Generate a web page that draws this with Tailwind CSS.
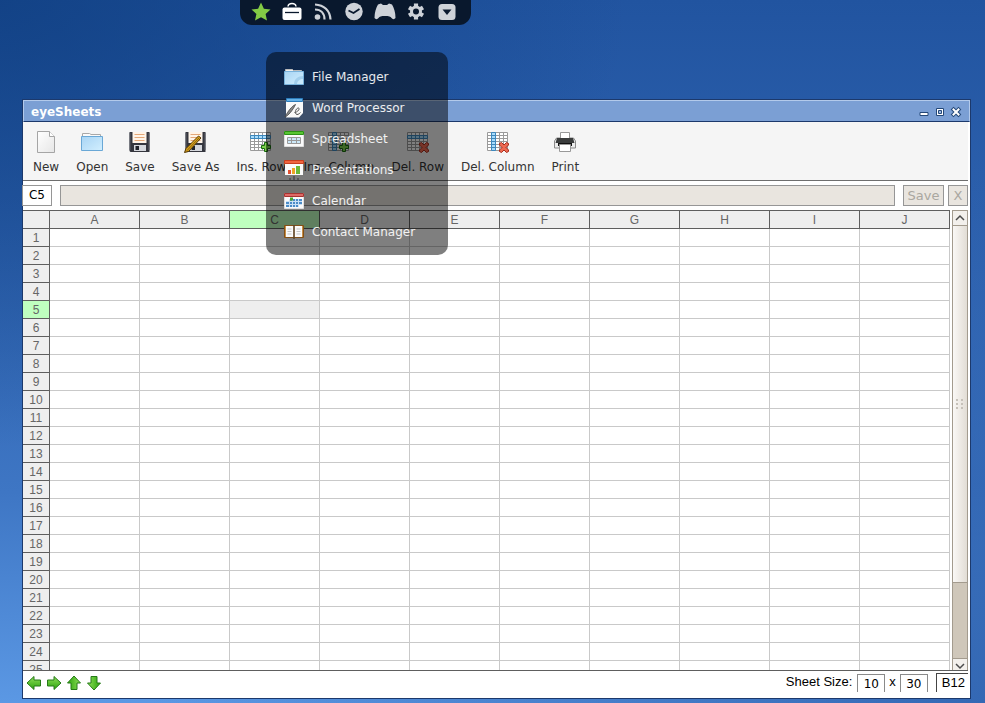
<!DOCTYPE html>
<html lang="en">
<head>
<meta charset="utf-8">
<title>eyeSheets</title>
<script src="https://cdn.jsdelivr.net/npm/@tailwindcss/browser@4"></script>
</head>
<body class="relative flex h-screen flex-col overflow-hidden bg-[radial-gradient(ellipse_at_0%_0%,#0f3e80cc_0%,#0f3e8000_45%),radial-gradient(ellipse_at_100%_100%,#2a5ca8cc_0%,#2a5ca800_60%),linear-gradient(180deg,#2154a0_0%,#2c60ad_30%,#3e76c4_70%,#5b98e4_100%)] pt-[99px] pr-[14px] pb-1 pl-[22px] font-['DejaVu_Sans',sans-serif] text-xs text-[#333]">

<svg class="absolute size-0" aria-hidden="true">
  <defs>
    <linearGradient id="blue" x1="0" y1="0" x2="1" y2="1"><stop offset="0" stop-color="#a8d4f4"/><stop offset="1" stop-color="#d2efff"/></linearGradient>
    <linearGradient id="paper" x1="0" y1="0" x2="1" y2="1"><stop offset="0" stop-color="#fff"/><stop offset="1" stop-color="#e6e6e6"/></linearGradient>
    <linearGradient id="green" x1="0" y1="0" x2="0" y2="1"><stop offset="0" stop-color="#8fe05a"/><stop offset="1" stop-color="#2ba20c"/></linearGradient>
    <g id="grid"><path d="M1.500 2.500h20v18h-20z" fill="#fff"/><path d="M1.500 2.500h20v18h-20zM5.500 2v19M9.500 2v19M13.500 2v19M17.500 2v19M1 5.500h21M1 8.500h21M1 11.500h21M1 14.500h21M1 17.500h21" fill="none" stroke="#9a9a9a"/></g>
    <path id="plus" d="M15.500 12.500h3v3h3v3h-3v3h-3v-3h-3v-3h3z" fill="#7ed04c" stroke="#176c0c"/>
    <path id="cross" d="M13.500 13.500l2-1 2.500 2.500 2.500-2.500 2 1v1.500l-2.500 2.500 2.500 2.500v1.500l-2 1-2.500-2.500-2.500 2.500-2-1v-1.500l2.500-2.500-2.500-2.500z" fill="#ee6a52" stroke="#a92c1c"/>
    <g id="disk"><path d="M1.500 2h20v20h-19l-1-1z" fill="#35363e"/><path d="M4.500 2h14v11h-14z" fill="#fff4e8"/><path d="M6.500 4.500h10M6.500 7.500h10M6.500 10.500h10" stroke="#e5a878"/><path d="M6 15h12v6H6z" fill="#d5d7dc"/><path d="M7.500 16h3.500v4H7.500z" fill="#20222a"/><path d="M2 3v17M21 3v17" stroke="#5c5f69"/></g>
    <path id="arrow" d="M1 8l7-6.500v3.500h6.500v6H8v3.500z" fill="url(#green)" stroke="#257a17" stroke-linejoin="round"/>
  </defs>
</svg>

<nav aria-label="Dock" class="absolute top-0 left-[240px] flex h-[25px] w-[231px] justify-center gap-[11px] rounded-b-xl bg-[#09182d] pt-[2px] pr-[3px] text-[#ced2d8]">
  <button aria-label="Favourites" class="size-5"><svg viewBox="0 0 20 20"><path d="M10 .5l2.900 6.200 6.600.7-4.900 4.500 1.400 6.600L10 15.200l-6 3.300 1.400-6.600L.5 7.400l6.600-.7z" fill="#83cb45"/></svg></button>
  <button aria-label="Office" class="size-5"><svg viewBox="0 0 20 20"><path d="M6 4.500C6.500.5 13.500.5 14 4.500" fill="none" stroke="#fff" stroke-width="1.500"/><rect x=".5" y="5.500" width="19" height="12.500" rx="2" fill="#fff"/><path d="M3 10.500h14" stroke="#09182d" stroke-width="1.300"/></svg></button>
  <button aria-label="Feeds" class="size-5"><svg viewBox="0 0 20 20" fill="none" stroke="currentColor" stroke-width="2.200"><circle cx="4.500" cy="15" r="2.800" fill="currentColor" stroke="none"/><path d="M2 7.500c6 0 9.500 4 9.500 10M2 2.500c9 .5 15 6 15.500 15"/></svg></button>
  <button aria-label="Clock" class="size-5"><svg viewBox="0 0 20 20"><circle cx="10" cy="9.500" r="8.700" fill="currentColor"/><path d="M4.500 8.500l5 2.500 6-4" fill="none" stroke="#09182d" stroke-width="1.800"/></svg></button>
  <button aria-label="Games" class="size-5"><svg viewBox="0 0 20 20" class="overflow-visible"><path d="M3 2.500l3-1 2 1.500h4l2-1.500 3 1c2 3.500 3.500 8 3.500 13.500-1 1.500-3 1.500-4 0-1-1.500-2.500-2-6.500-2S4.500 14.500 3.500 16c-1 1.500-3 1.500-4 0C-.5 10.500 1 6 3 2.500z" fill="currentColor"/></svg></button>
  <button aria-label="Settings" class="size-5"><svg viewBox="0 0 20 20"><g stroke="currentColor" stroke-width="4.200"><path d="M10 1.500v16M3 5.500l14 8M3 13.500l14-8"/></g><circle cx="10" cy="9.500" r="6" fill="currentColor"/><circle cx="10" cy="9.500" r="3" fill="#09182d"/></svg></button>
  <button aria-label="More" class="size-5"><svg viewBox="0 0 20 20"><rect x="1.500" y="2" width="17" height="16" rx="3.500" fill="currentColor"/><path d="M5.500 7.500h9L10 13z" fill="#09182d"/></svg></button>
</nav>

<main class="flex min-h-0 flex-1 flex-col border border-[#1c396c] bg-white">
  <header class="flex h-[22px] shrink-0 items-center border border-[#b3caeb] border-b-[#1c396c] bg-[#7b9fd4] px-[7px] pt-px">
    <h1 class="flex-1 font-bold text-white">eyeSheets</h1>
    <div class="flex gap-1">
      <button aria-label="Minimize" class="size-3"><svg viewBox="0 0 12 12"><path d="M2 6.500h8v3H2z" fill="#fff" stroke="#244878"/></svg></button>
      <button aria-label="Maximize" class="size-3"><svg viewBox="0 0 12 12"><path d="M2.500 2.500h7v7h-7z" fill="#fff" stroke="#244878"/><path d="M4.500 4.500h3v3h-3z" fill="#9dbce6" stroke="#244878"/></svg></button>
      <button aria-label="Close" class="size-3"><svg viewBox="0 0 12 12"><path d="M3.500 3.500l5 5M8.500 3.500l-5 5" stroke="#244878" stroke-width="4" stroke-linecap="square"/><path d="M3.500 3.500l5 5M8.500 3.500l-5 5" stroke="#fff" stroke-width="2" stroke-linecap="square"/></svg></button>
    </div>
  </header>

  <div role="toolbar" aria-label="Sheet tools" class="mr-[2px] flex h-[59px] shrink-0 items-start gap-[17px] border-b border-[#6e6e6e] bg-[#f5f5f5] pt-2 pl-[10px] whitespace-nowrap">
    <button class="flex flex-col items-center gap-[5px]"><svg class="size-6" viewBox="0 0 24 24"><path d="M3.500 1.500h12l5 5v16h-17z" fill="url(#paper)" stroke="#a5a5a5"/><path d="M15.500 1.500v5h5" fill="#fff" stroke="#a5a5a5"/></svg><span>New</span></button>
    <button class="flex flex-col items-center gap-[5px]"><svg class="size-6" viewBox="0 0 24 24"><path d="M2.500 6V3.500h7l1.500 1h9.500V8" fill="#fafafa" stroke="#a8a8a8"/><path d="M1.500 6.500h21v14h-21z" fill="url(#blue)" stroke="#6aa8d6"/></svg><span>Open</span></button>
    <button class="flex flex-col items-center gap-[5px]"><svg class="size-6" viewBox="0 0 24 24"><use href="#disk"/></svg><span>Save</span></button>
    <button class="flex flex-col items-center gap-[5px]"><svg class="size-6" viewBox="0 0 24 24"><use href="#disk"/><path d="M14.500 6l2.500 2L4.500 21.500l-4 1 1.500-4z" fill="#d9a21b" stroke="#513706"/><path d="M15 8L3 20.500" stroke="#8a6210"/></svg><span>Save As</span></button>
    <button class="flex flex-col items-center gap-[5px]"><svg class="size-6" viewBox="0 0 24 24"><use href="#grid"/><path d="M1.500 5.500h20v3h-20z" fill="#a9dcfa" stroke="#3c87bd"/><path d="M5.500 5v4M9.500 5v4M13.500 5v4M17.500 5v4" stroke="#3c87bd"/><use href="#plus"/></svg><span>Ins. Row</span></button>
    <button class="flex flex-col items-center gap-[5px]"><svg class="size-6" viewBox="0 0 24 24"><use href="#grid"/><path d="M5.500 2.500h4v18h-4z" fill="#a9dcfa" stroke="#3c87bd"/><path d="M5 5.500h5M5 8.500h5M5 11.500h5M5 14.500h5M5 17.500h5" stroke="#3c87bd"/><use href="#plus"/></svg><span>Ins. Column</span></button>
    <button class="flex flex-col items-center gap-[5px]"><svg class="size-6" viewBox="0 0 24 24"><use href="#grid"/><path d="M1.500 5.500h20v3h-20z" fill="#a9dcfa" stroke="#3c87bd"/><path d="M5.500 5v4M9.500 5v4M13.500 5v4M17.500 5v4" stroke="#3c87bd"/><use href="#cross"/></svg><span>Del. Row</span></button>
    <button class="flex flex-col items-center gap-[5px]"><svg class="size-6" viewBox="0 0 24 24"><use href="#grid"/><path d="M5.500 2.500h4v18h-4z" fill="#a9dcfa" stroke="#3c87bd"/><path d="M5 5.500h5M5 8.500h5M5 11.500h5M5 14.500h5M5 17.500h5" stroke="#3c87bd"/><use href="#cross"/></svg><span>Del. Column</span></button>
    <button class="flex flex-col items-center gap-[5px]"><svg class="size-6" viewBox="0 0 24 24"><path d="M1.500 11l2-3h17l2 3v7h-21z" fill="#ececec" stroke="#8a8a8a"/><path d="M7.500 2.500h9v6h-9z" fill="#fff" stroke="#999"/><path d="M4 8h16l1.500 5h-19z" fill="#3a3c3c"/><path d="M5 13h14v3H5z" fill="#111"/><path d="M6.500 14.500h11v7h-11z" fill="#fff" stroke="#999"/></svg><span>Print</span></button>
  </div>

  <div class="mr-[2px] flex shrink-0 gap-1 pt-1 pb-1">
    <input aria-label="Cell" value="C5" class="-ml-px h-[21px] w-[30px] border border-[#969696] pb-[2px] text-center text-black">
    <input aria-label="Formula" disabled class="ml-1 h-[21px] min-w-0 flex-1 border border-[#969696] bg-[#e9e5df] px-1">
    <button disabled class="ml-1 h-[21px] w-[41px] border border-[#969696] bg-[#e9e5df] text-[13px] leading-none text-[#aaa7a0]">Save</button>
    <button disabled class="h-[21px] w-5 border border-[#969696] bg-[#e9e5df] text-[13px] leading-none text-[#aaa7a0]">X</button>
  </div>

  <div class="mr-[2px] flex min-h-0 flex-1 gap-[2px] border-b border-[#5e5e5e]">
    <div class="min-h-0 min-w-0 flex-1 overflow-hidden border-t border-[#5e5e5e]">
      <table class="w-full table-fixed border-separate border-spacing-0 font-['Liberation_Sans',sans-serif] text-xs leading-4 text-[#666]">
        <thead><tr id="letters"></tr></thead>
        <tbody id="rows"></tbody>
      </table>
    </div>
    <div role="scrollbar" aria-label="Sheet scroll" aria-controls="rows" aria-valuenow="0" class="flex w-4 flex-col border-x border-t border-[#a39b8e] bg-[#cfc7ba]">
      <button aria-label="Scroll up" class="h-[15px] border-b border-[#a39b8e] bg-[#f3f0ec]"><svg class="mx-auto" width="14" height="14" viewBox="0 0 14 14"><path d="M3 9l4-4 4 4" fill="none" stroke="#4c4c4c" stroke-width="1.500"/></svg></button>
      <div class="flex flex-[357] flex-col items-center justify-center border-b border-[#a39b8e] bg-linear-to-r from-[#faf8f6] to-[#e2ddd5]"><svg width="8" height="10" viewBox="0 0 8 10"><path d="M0 0h2v2H0zM5 0h2v2H5zM0 4h2v2H0zM5 4h2v2H5zM0 8h2v2H0zM5 8h2v2H5z" fill="#c6c1b9"/></svg></div>
      <div class="flex-[75]"></div>
      <button aria-label="Scroll down" class="h-3 border-t border-[#a39b8e] bg-[#f3f0ec]"><svg class="mx-auto" width="14" height="11" viewBox="0 0 14 11"><path d="M3 5l4 4 4-4" fill="none" stroke="#4c4c4c" stroke-width="1.500"/></svg></button>
    </div>
  </div>

  <footer class="mr-[2px] flex h-[27px] shrink-0 items-start font-['Liberation_Sans',sans-serif] text-[13px] text-black">
    <div class="flex flex-1 gap-1 pt-1 pl-[3px]">
      <button aria-label="Left" class="size-4"><svg viewBox="0 0 16 16"><use href="#arrow"/></svg></button>
      <button aria-label="Right" class="size-4"><svg viewBox="0 0 16 16" class="-scale-x-100"><use href="#arrow"/></svg></button>
      <button aria-label="Up" class="size-4"><svg viewBox="0 0 16 16" class="rotate-90"><use href="#arrow"/></svg></button>
      <button aria-label="Down" class="size-4"><svg viewBox="0 0 16 16" class="-rotate-90"><use href="#arrow"/></svg></button>
    </div>
    <label for="cols" class="pt-[2px] pr-[5px]">Sheet Size:</label>
    <input id="cols" value="10" class="mt-[3px] h-[18px] w-7 border border-b-0 border-[#8a8a8a] text-center font-['DejaVu_Sans',sans-serif] text-xs">
    <label for="lines" class="px-1 pt-[2px]">x</label>
    <input id="lines" value="30" class="mt-[3px] h-[18px] w-7 border border-b-0 border-[#8a8a8a] text-center font-['DejaVu_Sans',sans-serif] text-xs">
    <output class="mt-[2px] ml-2 h-[19px] border-t border-l border-[#444] pr-[3px] pl-[5px] leading-[18px]">B12</output>
  </footer>
</main>

<ul class="absolute top-[52px] left-[266px] w-[182px] rounded-[10px] bg-black/50 pt-[9px] pb-2 text-white/90">
  <li><a href="#files" class="flex h-[31px] items-center gap-2 pl-[18px]"><svg class="size-5" viewBox="0 0 20 20"><path d="M1.500 5V2.500h7l1 1h8V5" fill="#eee" stroke="#bbb"/><path d="M.5 4.500h19v13H.5z" fill="url(#blue)" stroke="#78b2dc"/><path d="M10 17c0-5 4-8 9-8v8z" fill="#a3cfed"/><path d="M13 17c0-3 3-5 6-5v5z" fill="#c7e7fa"/></svg>File Manager</a></li>
  <li><a href="#words" class="flex h-[31px] items-center gap-2 pl-[18px]"><svg class="size-5" viewBox="0 0 20 20"><path d="M2 1h17v14l-4 4.500H2z" fill="#fafafa"/><path d="M2.500.5h16v3h-16z" fill="#64b0e6" stroke="#2c7cbb"/><path d="M1 19c3-1 8-7 10.500-12.500C8 8 4 13 1 19" fill="#888" stroke="#444" stroke-width=".8"/><path d="M10.500 14.500c3 0 6-4 4-4.500-3 0-4.500 6-1.500 6.500 1.500 0 2.500-1 3.500-2" fill="none" stroke="#555"/></svg>Word Processor</a></li>
  <li><a href="#sheets" class="flex h-[31px] items-center gap-2 pl-[18px]"><svg class="size-5" viewBox="0 0 20 20"><path d="M.5 2.500h19v15H.5z" fill="#fafafa" stroke="#ddd"/><path d="M.5 2.500h19v3H.5z" fill="#57c532" stroke="#2b9215"/><path d="M3.500 8.500h13v6h-13zM7.500 8v7M12.500 8v7M3 11.500h14" fill="#cde9f9" stroke="#999"/></svg>Spreadsheet</a></li>
  <li><a href="#slides" class="flex h-[31px] items-center gap-2 pl-[18px]"><svg class="size-5" viewBox="0 0 20 20"><path d="M1 0h18v15H1z" fill="#fafafa"/><path d="M.5.500h19v3H.500z" fill="#ef6540" stroke="#c93f20"/><path d="M4 10h3v4H4z" fill="#e35130"/><path d="M8 8h3v6H8z" fill="#eda524"/><path d="M12 6h4v8h-4z" fill="#69b838"/><path d="M5 19h2M9 17h2M9 19h2M13 19h2" stroke="#333"/></svg>Presentations</a></li>
  <li><a href="#calendar" class="flex h-[31px] items-center gap-2 pl-[18px]"><svg class="size-5" viewBox="0 0 20 20"><path d="M.5 2.500h19v15H.5z" fill="#fafafa" stroke="#ddd"/><path d="M.5 2.500h19v3H.5z" fill="#dd6a66" stroke="#a83432"/><path d="M5 8h13v5h-3v3H2v-6h3z" fill="#4c8cc8"/><path d="M5.500 8v8M8.500 8v8M11.500 8v8M14.500 8v8M2 10.500h16M2 13.500h16" stroke="#cbe2f6"/><path d="M6 6.500h3v3H6z" fill="#4aa52c"/></svg>Calendar</a></li>
  <li><a href="#contacts" class="flex h-[31px] items-center gap-2 pl-[18px]"><svg class="size-5" viewBox="0 0 20 20"><path d="M.5 3.500h19v12H.5z" fill="#c98e45" stroke="#825018"/><path d="M2 4h7.500v11H2zM10.500 4H18v11h-7.500z" fill="#fafafa"/><path d="M10 3v14" stroke="#57452e" stroke-width="1.500"/><path d="M3.500 7h4M3.500 9.500h4M3.500 12h4M12.500 7h4M12.500 9.500h4M12.500 12h4" stroke="#c4c4c4"/></svg>Contact Manager</a></li>
</ul>

<script>
  // Builds the 10 x 30 sheet, with C5 as the selected cell.
  const heads = ['', ...'ABCDEFGHIJ'];
  document.getElementById('letters').innerHTML = heads.map(h =>
    h === '' ? '<th class="h-[18px] w-[27px] border-r border-b border-[#5e5e5e] bg-[#eee] p-0"></th>'
    : `<th scope="col" class="${h === 'C' ? 'bg-[#bfffbf]' : 'bg-[#eee]'} h-[18px] border-r border-b border-[#5e5e5e] p-0 font-normal">${h}</th>`).join('');
  let body = '';
  for (let r = 1; r <= 30; r++) {
    body += `<tr><th scope="row" class="${r === 5 ? 'bg-[#bfffbf]' : 'bg-[#eee]'} h-[18px] border-r border-b border-[#5e5e5e] p-0 font-normal">${r}</th>`;
    for (let c = 1; c <= 10; c++)
      body += `<td class="${r === 5 && c === 3 ? 'bg-[#eee]' : 'bg-white'} h-[18px] border-r border-b border-[#c9c9c9] p-0"></td>`;
    body += '</tr>';
  }
  document.getElementById('rows').innerHTML = body;
</script>
</body>
</html>
